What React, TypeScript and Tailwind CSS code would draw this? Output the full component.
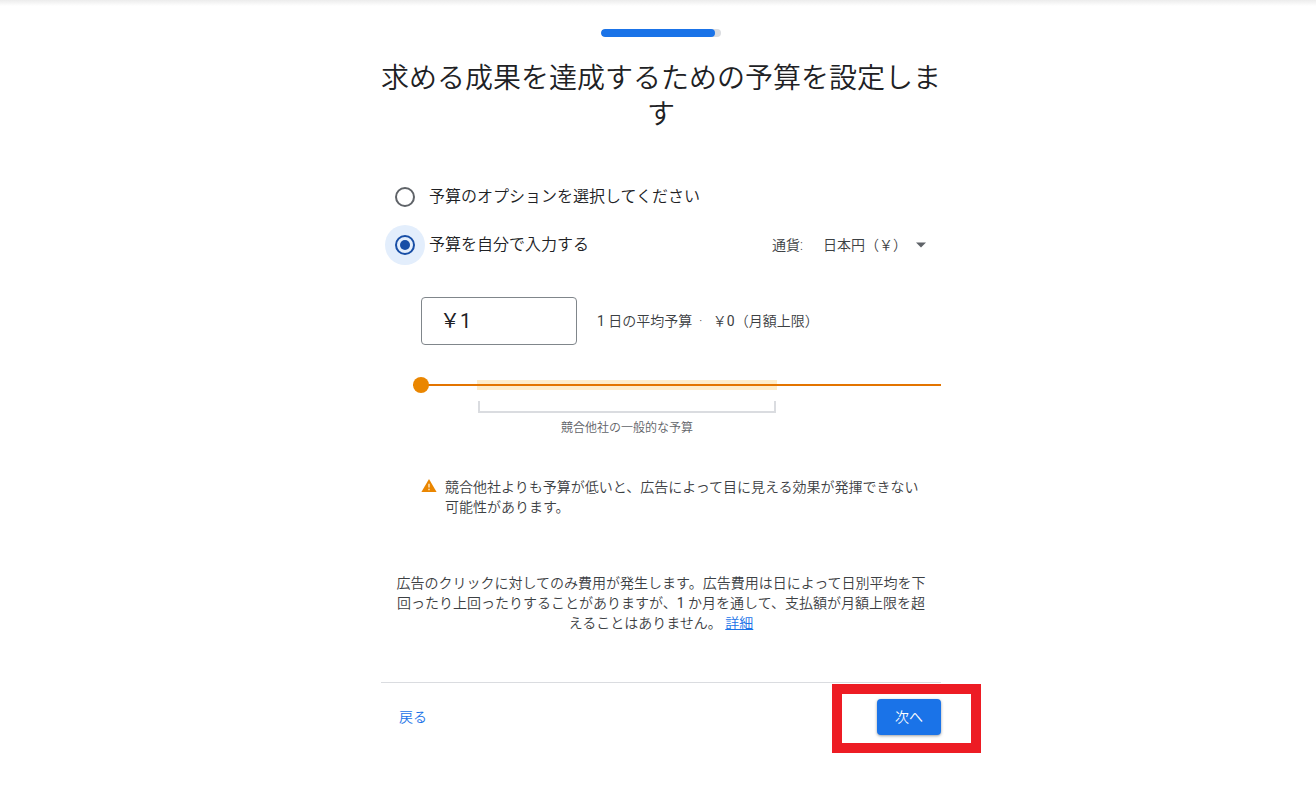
import React, { useState } from 'react';

const currencies = [{ code: 'JPY', label: '日本円（￥）' }];

const ProgressBar: React.FC<{ percent: number }> = ({ percent }) => (
  <div
    className="mx-auto h-2 w-[120px] overflow-hidden rounded-full bg-[#dadce0]"
    role="progressbar"
    aria-valuenow={percent}
  >
    <div className="h-full rounded-full bg-[#1a73e8]" style={{ width: `${percent}%` }} />
  </div>
);

interface RadioOptionProps {
  value: string;
  label: string;
  checked: boolean;
  onSelect: (value: string) => void;
}

const RadioOption: React.FC<RadioOptionProps> = ({ value, label, checked, onSelect }) => (
  <label className="flex h-12 cursor-pointer items-center gap-1 pl-1 text-base text-[#202124]">
    <span
      className={`flex h-10 w-10 items-center justify-center rounded-full ${
        checked ? 'bg-[#e3eefc]' : ''
      }`}
    >
      <input
        type="radio"
        name="budget"
        value={value}
        checked={checked}
        onChange={() => onSelect(value)}
        className="h-5 w-5 appearance-none rounded-full border-2 border-[#5f6368] bg-clip-content p-[3px] outline-none checked:border-[#174ea6] checked:bg-[#174ea6]"
      />
    </span>
    <span>{label}</span>
  </label>
);

const BudgetSlider: React.FC = () => {
  const [value, setValue] = useState(0);

  return (
    <div className="mt-8">
      <div className="relative -ml-2 flex h-4 items-center">
        {/* Typical range of competitors */}
        <div className="absolute left-16 h-[10px] w-[300px] bg-[#feedcc]" />
        <input
          type="range"
          aria-label="1 日の平均予算"
          min={0}
          max={100}
          value={value}
          onChange={(e) => setValue(Number(e.target.value))}
          className="relative h-4 w-full cursor-pointer appearance-none bg-transparent outline-none [&::-webkit-slider-runnable-track]:h-[2px] [&::-webkit-slider-runnable-track]:bg-[#e37400] [&::-webkit-slider-thumb]:-mt-[7px] [&::-webkit-slider-thumb]:h-4 [&::-webkit-slider-thumb]:w-4 [&::-webkit-slider-thumb]:appearance-none [&::-webkit-slider-thumb]:rounded-full [&::-webkit-slider-thumb]:bg-[#ea8600]"
        />
      </div>
      <div className="mt-2 ml-[57px] w-[298px]">
        <div className="h-3 border-2 border-t-0 border-[#dadce0]" />
        <p className="pt-[5px] text-center text-xs leading-5 text-[#5f6368]">
          競合他社の一般的な予算
        </p>
      </div>
    </div>
  );
};

const App: React.FC = () => {
  const [option, setOption] = useState('custom');
  const [amount, setAmount] = useState('￥1');

  return (
    <div className="bg-white pb-12 font-['Roboto','Noto_Sans_CJK_JP',sans-serif] text-sm leading-5 font-[350] text-[#3c4043]">
      <div className="h-[6px] bg-linear-to-b from-[#ececec] to-white" />

      <div className="pl-[6px]">
        <main className="mx-auto max-w-[560px] pt-[23px]">
          <ProgressBar percent={95} />

          <h1 className="mt-6 text-center text-[28px] leading-9 font-[350] text-[#202124]">
            求める成果を達成するための予算を設定します
          </h1>

          <div className="mt-10">
            <RadioOption
              value="preset"
              label="予算のオプションを選択してください"
              checked={option === 'preset'}
              onSelect={setOption}
            />
            <div className="flex items-center justify-between">
              <RadioOption
                value="custom"
                label="予算を自分で入力する"
                checked={option === 'custom'}
                onSelect={setOption}
              />
              <div className="flex items-center pr-[14px]">
                <label htmlFor="currency" className="pr-5">
                  通貨:
                </label>
                <div className="relative flex items-center">
                  <select id="currency" className="appearance-none bg-transparent pr-5 outline-none">
                    {currencies.map((currency) => (
                      <option key={currency.code}>{currency.label}</option>
                    ))}
                  </select>
                  <svg
                    className="pointer-events-none absolute right-0 h-[6px] w-3"
                    viewBox="0 0 12 6"
                    fill="#5f6368"
                  >
                    <path d="M1 0.5h10l-5 5z" />
                  </svg>
                </div>
              </div>
            </div>
          </div>

          <div className="mt-7 pl-10">
            <div className="flex items-center gap-5">
              <input
                type="text"
                aria-label="1 日の平均予算"
                value={amount}
                onChange={(e) => setAmount(e.target.value)}
                className="h-12 w-[156px] rounded border border-[#80868b] px-[18px] pb-[3px] text-xl font-normal text-[#202124] outline-none"
              />
              <p>
                <span className="font-normal">1</span> 日の平均予算 &nbsp;·&nbsp;&nbsp; ￥
                <span className="font-normal">0</span>（月額上限）
              </p>
            </div>

            <BudgetSlider />

            <div className="mt-[39px] flex items-start gap-2 pr-3">
              <svg className="mt-px h-4 w-4 shrink-0" viewBox="0 0 16 16">
                <path d="M8 1l7.6 13H0.4z" fill="#ea8600" />
                <path d="M7.3 5.8h1.4v3.8H7.3zM7.3 10.8h1.4v1.4H7.3z" fill="#fce8c8" />
              </svg>
              <p>
                競合他社よりも予算が低いと、広告によって目に見える効果が発揮できない可能性があります。
              </p>
            </div>
          </div>

          <p className="mt-14 px-[10px] text-center">
            広告のクリックに対してのみ費用が発生します。広告費用は日によって日別平均を下回ったり上回ったりすることがありますが、
            <span className="font-normal">1</span>{' '}
            か月を通して、支払額が月額上限を超えることはありません。{' '}
            <a href="#details" className="text-[#1a73e8] underline">
              詳細
            </a>
          </p>

          <div className="mt-[49px] flex items-center justify-between border-t border-[#dadce0] pt-4">
            <button type="button" className="h-9 px-[18px] text-[#1a73e8]">
              戻る
            </button>
            <div className="relative">
              <button
                type="button"
                className="h-9 w-16 rounded bg-[#1a73e8] text-white shadow-[0_1px_3px_rgba(60,64,67,0.5)]"
              >
                次へ
              </button>
              {/* Highlight around the next step */}
              <div className="pointer-events-none absolute -top-[15px] -right-10 -bottom-[18px] -left-[45px] border-[10px] border-[#ed1c24]" />
            </div>
          </div>
        </main>
      </div>
    </div>
  );
};

export default App;
